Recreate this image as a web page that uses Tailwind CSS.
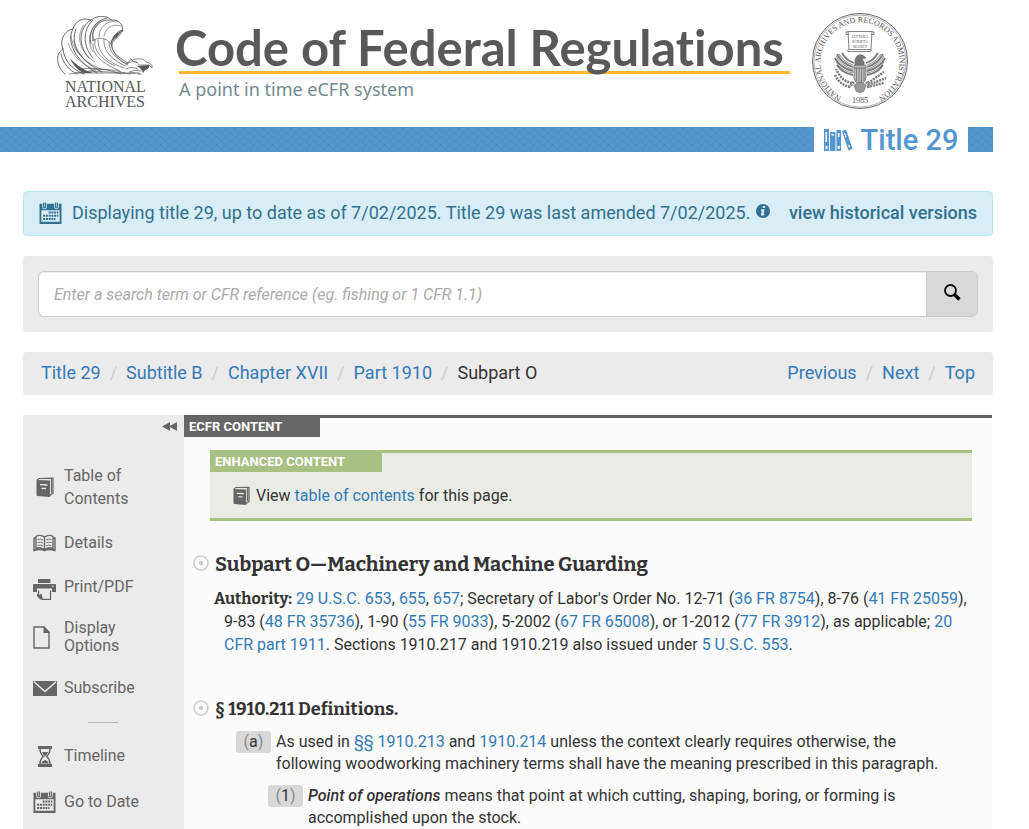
<!DOCTYPE html>
<html lang="en">
<head>
<meta charset="utf-8">
<title>eCFR Title 29 Subpart O</title>
<script src="https://cdn.jsdelivr.net/npm/@tailwindcss/browser@4"></script>
</head>
<body class="min-h-screen flex flex-col bg-white text-base text-[#333] font-[Roboto,'Liberation_Sans',sans-serif]">
<svg class="hidden" aria-hidden="true">
  <symbol id="cal" viewBox="0 0 24 24">
    <path fill="currentColor" fill-rule="evenodd" d="M0 2h3v3.500a2.500 2.500 0 0 0 5 0V2h8v3.500a2.500 2.500 0 0 0 5 0V2h3v22H0zM2 9v12.500h20V9z"/>
    <path fill="none" stroke="currentColor" stroke-width="1.300" d="M4.500 .5v5a1 1 0 0 0 2 0v-5M17.500 .5v5a1 1 0 0 0 2 0v-5"/>
    <path stroke="currentColor" stroke-width="2.200" stroke-dasharray="2.200 .8" d="M10 11.500h10.500M4 15h16.500M4 18.500h13.500"/>
  </symbol>
  <symbol id="book" viewBox="0 0 18 20">
    <path fill="none" stroke="currentColor" stroke-width="1.200" d="M1 2.500L3 1l14-.3v15L14 18M15.500 1.500v14"/>
    <path fill="currentColor" d="M.5 2.500l13.500.5v16.500L1.500 18.500Q.5 18.500.5 17z"/>
    <path stroke="#ebebeb" stroke-width="1.300" d="M4 7.200l7.500.3M5.500 10.800l4.500.2"/>
  </symbol>
</svg>

<header>
  <div class="h-[127px] flex items-start pl-[55px]">
    <a href="#" class="block w-[104px] pt-4 shrink-0 text-[#58595b]" aria-label="National Archives">
      <svg class="block w-[100px] h-[60px]" viewBox="0 0 100 60" fill="none" stroke="#58595b" stroke-width=".9" stroke-linecap="round">
        <path d="M10 58C1 50 0 38 8 33C4 24 10 14 18 13C20 5 28 1 36 4C42-1 52-1 56 4C64 3 70 10 67 15"/>
        <path d="M8 33C9 44 16 53 29 58M6 38C8 48 15 55 22 58M18 13C11 25 20 45 42 57M21 13C15 28 24 44 47 56M36 4C22 12 24 32 34 42M38 4C27 14 28 31 38 42M56 4C42 3 36 14 38 24M52 2C40 5 33 15 36 28"/>
        <path d="M13 27C17 39 26 48 40 54M16 20C18 35 29 46 46 53M29 9C20 20 25 37 40 46M45 5C33 13 32 26 38 36M62 5C50 5 44 12 44 21M66 10C56 7 50 13 49 20M44 8C37 14 36 20 40 25" stroke-width=".6"/>
        <path d="M37 25C44 20 52 22 56 28C59 39 64 45 73 49M38 28C37 38 46 47 65 55M43 24C43 36 51 46 69 52M49 23C48 34 56 44 71 50M54 26C54 36 61 43 72 48M40 24C38 34 46 43 60 50" stroke-width=".7"/>
        <path d="M67 15C64 23 56 23 57 31C58 38 66 43 73 47M60 21C61 16 65 14 68 15C66 12 64 19 60 21Z" />
        <path fill="#58595b" stroke="none" d="M57 23q3-7 9-7q-2 2-4 5q-6 3-5 9q-2-4 0-7zM15 42q7 9 22 15h-9Q18 51 15 42zM18 23q4 16 18 26Q21 40 18 23z"/>
        <path d="M72 48Q74 43 81 43Q89 42 91 46Q98 47 97 52L94 49L83 49M72 47q5-2 10-1M75 42l3 3M71 53Q76 50 83 53M74 56q6-3 12-1M30 56Q50 50 70 57M14 58Q40 53 75 58M25 53Q45 50 66 58M20 57h60M78 45l5 2" stroke-width=".7"/>
        <path fill="#58595b" d="M82 50l12-1q1 4-4 5l-2 3q-1-4-6-7z" stroke="none"/>
        <path d="M75 57h9M83 58h3"/>
      </svg>
      <div class="pl-[10px] pt-[3px] font-['Liberation_Serif',serif] text-base leading-[15px]">NATIONAL<br>ARCHIVES</div>
    </a>
    <div class="ml-[20px] mt-4 w-[611px] shrink-0">
      <a href="#" class="relative z-10 block h-[55px] -ml-1 whitespace-nowrap text-[#58595b] font-bold text-[49px] leading-[63px] [font-variant-ligatures:none] font-[Lato,sans-serif]">Code of Federal Regulations</a>
      <div class="h-[3px] bg-[#fdb933]"></div>
      <div class="pt-[3px] text-lg leading-6 text-[#728a8f] font-['Noto_Sans',sans-serif]">A point in time eCFR system</div>
    </div>
    <svg class="ml-[21px] mt-3 w-[98px] h-[98px] shrink-0" viewBox="0 0 98 98" fill="none" stroke="#666" role="img" aria-label="National Archives and Records Administration seal">
      <defs><path id="ring" d="M33 86A39.500 39.500 0 1 1 65 86"/></defs>
      <circle cx="49" cy="49" r="47.500"/><circle cx="49" cy="49" r="46" stroke-width=".5"/>
      <g fill="#555" stroke="none" class="font-['Liberation_Serif',serif]">
        <text font-size="8"><textPath href="#ring" startOffset="50%" text-anchor="middle">NATIONAL ARCHIVES AND RECORDS ADMINISTRATION</textPath></text>
        <text x="49" y="91" font-size="8" text-anchor="middle">1985</text>
        <text x="49" y="26" font-size="4" text-anchor="middle">LITTERA</text><text x="49" y="31" font-size="4" text-anchor="middle">SCRIPTA</text><text x="49" y="36" font-size="4" text-anchor="middle">MANET</text>
      </g>
      <path stroke-width=".8" d="M37 19.500h24l-1 18H38zM37 19.500q-3 0-2 3h3M61 19.500q3 0 2 3h-3M38 37.500q-3 1-1 2h22q2 0 1-2"/>
      <path stroke="#777" stroke-width="1.800" d="M43 51Q36 49 31 41M42 55Q31 52 26 42M42 59Q29 56 24 46M42 63Q31 61 26 53M55 51Q62 49 67 41M56 55Q67 52 72 42M56 59Q69 56 74 46M56 63Q67 61 72 53"/>
      <path stroke-width=".6" stroke="#444" d="M42 53Q33 50 28 42M42 57Q30 54 25 44M42 61Q30 59 25 50M56 53Q65 50 70 42M56 57Q68 54 73 44M56 61Q68 59 73 50"/>
      <path fill="#bbb" d="M43 53h12v13q-1 5-6 7q-5-2-6-7z" stroke-width=".8"/><path stroke-width=".7" d="M45.500 56v13M48 56v15M50.500 56v15M53 56v13M43 56h12"/>
      <path fill="#777" d="M44 53q-1-6 2-9q3-3 7 0l2 2-4 1q3 3 2 6z" stroke-width=".5"/>
      <path stroke-width="2.500" stroke="#777" stroke-dasharray="2 1" d="M41 71Q31 70 25 57M39 75Q29 73 24 63M57 71L73 60M57 73L75 66M56 75L73 71"/>
      <path stroke-width="3" stroke="#888" stroke-dasharray="2 .8" d="M43 70l-5 5M55 70l5 5M45 74q4 7 8 0"/>
      <path fill="#999" d="M43 73l6-3 6 3-2 6q-4 3-8 0z" stroke-width=".6"/>
    </svg>
  </div>
  <div class="mr-9 h-[25px] flex items-center bg-[#5396d0] bg-[repeating-linear-gradient(40deg,#42424214_0_1px,transparent_1px_6px),repeating-linear-gradient(-40deg,#42424214_0_1px,transparent_1px_6px)]">
    <h1 class="ml-auto mr-[25px] w-[154px] h-[34px] bg-white flex items-center justify-center gap-2 text-[#5396d0] text-[29px] font-medium leading-[34px] whitespace-nowrap">
      <svg class="w-[29px] h-[22px] shrink-0" viewBox="0 0 29 22"><g fill="#5396d0"><path d="M0 0h5v22H0zM6 3h5.500v19H6zM12.500 1h4.500v21h-4.500zM18 2l4-1.500L28.500 20l-4 1.500z"/></g><path fill="white" d="M1.500 3h1.500v10h-1.500zM1.500 17h2v3h-2zM7.500 5h2.500v1.500H7.500zM14 4h1.500v4h-1.500zM13.700 17h2v3h-2zM20 4l1-.3 1.500 4.500-1 .3zM24 16.500l1.500-.5.7 2-1.500.5z"/></svg>
      <span>Title 29</span>
    </h1>
  </div>
</header>

<div class="flex-1 flex flex-col pl-[23px] pr-9 pt-[39px]">
  <div class="h-[45px] shrink-0 flex items-center rounded bg-[#d9edf7] border border-[#bce8f1] text-[#31708f] text-lg px-[15px] pb-[2px] whitespace-nowrap">
    <svg class="w-[23px] h-[22px] shrink-0"><use href="#cal"/></svg>
    <p class="ml-[10px]">Displaying title 29, up to date as of 7/02/2025. Title 29 was last amended 7/02/2025.</p>
    <svg class="ml-[6px] mb-1 w-[14px] h-[14px] shrink-0" viewBox="0 0 14 14"><circle cx="7" cy="7" r="7" fill="#31708f"/><path fill="#d9edf7" d="M7 2h2.300l-.4 2H6.600zM5 5.200h3.600l-1.100 4.600 1.200-.4-.4 1.400q-3.300 1.800-3.300 0l.8-4.100-1.200-.1z"/></svg>
    <a href="#" class="ml-auto font-medium">view historical versions</a>
  </div>

  <form class="mt-5 h-[76px] shrink-0 flex p-[15px] rounded bg-[#ebebeb]">
    <input type="text" aria-label="Search" placeholder="Enter a search term or CFR reference (eg. fishing or 1 CFR 1.1)" class="flex-1 min-w-0 bg-white border border-r-0 border-[#ccc] rounded-l-md pl-[15px] pt-px text-base placeholder:italic placeholder:text-[#aaa] shadow-[inset_0_1px_1px_rgba(0,0,0,0.075)]">
    <button type="button" aria-label="Submit search" class="w-[52px] flex items-center justify-center pb-1 bg-[#d8d8d8] border border-[#ccc] rounded-r-md">
      <svg class="w-[17px] h-[17px]" viewBox="0 0 17 17" fill="none" stroke="black"><circle cx="6.500" cy="6.500" r="5.500" stroke-width="1.800"/><path stroke-width="3.300" d="M10.500 10.500l5 5"/></svg>
    </button>
  </form>

  <nav aria-label="Breadcrumb" class="mt-5 h-[43px] shrink-0 flex items-center gap-[9px] px-[18px] pb-[2px] rounded bg-[#ebebeb] text-lg text-[#337ab7] whitespace-nowrap">
    <a href="#">Title 29</a><span class="text-[#ccc]">/</span><a href="#">Subtitle B</a><span class="text-[#ccc]">/</span><a href="#">Chapter XVII</a><span class="text-[#ccc]">/</span><a href="#">Part 1910</a><span class="text-[#ccc]">/</span><span class="text-[#333]">Subpart O</span>
    <a href="#" class="ml-auto">Previous</a><span class="text-[#ccc]">/</span><a href="#">Next</a><span class="text-[#ccc]">/</span><a href="#">Top</a>
  </nav>

  <div class="mt-5 flex-1 flex">
    <aside class="w-[161px] shrink-0 bg-[#ebebeb] text-[#666]">
      <div class="flex justify-end pr-[7px] pt-[7px]">
        <button type="button" aria-label="Collapse sidebar" class="h-[9px]"><svg class="block w-[15px] h-[9px]" viewBox="0 0 15 9"><path fill="#666" d="M8 0v9L0 4.500zM15 0v9L7 4.500z"/></svg></button>
      </div>
      <nav aria-label="Page tools" class="pt-8 pl-[10px]">
        <a href="#" class="flex items-center h-[48px] gap-2 leading-[23px]"><span class="w-[23px] flex justify-center shrink-0"><svg class="w-[18px] h-[21px]"><use href="#book"/></svg></span><span>Table of<br>Contents</span></a>
        <a href="#" class="flex items-center h-[44px] mt-[10px] gap-2"><svg class="w-[23px] h-[18px] shrink-0" viewBox="0 0 23 18" fill="none" stroke="#666"><path stroke-width="1.400" d="M11.500 15.500Q7 12.500 3 14.500V2.500Q7 0 11.500 3Q16 0 20 2.500V14.500Q16 12.500 11.500 15.500zM11.500 3v13M2.500 4H1v12.500q6-2 10.500 0q4.500-2 10.500 0V4h-1.500"/><path stroke-width=".9" d="M4.500 5.500q3-1 5.500.5M4.500 8.500q3-1 5.500.5M4.500 11.500q3-1 5.500.5M13 6q2.500-1.500 5.500-.5M13 9q2.500-1.500 5.500-.5M13 12q2.500-1.500 5.500-.5"/></svg><span>Details</span></a>
        <a href="#" class="flex items-center h-[44px] gap-2"><svg class="w-[23px] h-[21px] shrink-0 mt-1" viewBox="0 0 23 21"><path fill="#666" d="M5 0h12.500v4H5zM1 5h21q1 0 1 1v7h-4V9.500H4V13H0V6q0-1 1-1z"/><path fill="#ebebeb" d="M19 6.500h1.500v1.300H19z"/><path fill="none" stroke="#666" stroke-width="1.300" d="M5.500 11.500q.5 4-1 4.500q1 3 5 4.300h8V11.500"/><path fill="#666" d="M4 15.500q3.500.5 4.500-1l1.500 6.500q-4-1-6-5.500z"/></svg><span>Print/PDF</span></a>
        <a href="#" class="flex items-center h-[56px] gap-2 leading-[18px]"><span class="w-[23px] shrink-0"><svg class="w-[17px] h-[23px]" viewBox="0 0 17 23"><path fill="none" stroke="#666" stroke-width="1.400" d="M1 1h10l5 5v16H1z"/><path fill="#666" d="M10.500 0L17 7h-6.500z"/></svg></span><span>Display<br>Options</span></a>
        <a href="#" class="flex items-center h-[44px] mt-px gap-[7px]"><svg class="w-[24px] h-[15px] shrink-0" viewBox="0 0 24 15"><path fill="#666" d="M0 0h24v15H0z"/><path fill="none" stroke="#ebebeb" stroke-width="1.500" d="M1 .8l11 9.700L23 .8"/></svg><span>Subscribe</span></a>
        <hr class="w-[30px] ml-[55px] mt-3 mb-[11px] border-[#b5b5b5]">
        <a href="#" class="flex items-center h-[44px] gap-2"><span class="w-[23px] flex justify-center shrink-0"><svg class="w-[14px] h-[21px]" viewBox="0 0 14 21"><path fill="#666" d="M0 0h14v3H0zM0 18h14v3H0zM3 17.500q1-3 4-3.500q3 .5 4 3.500zM4 6h6q-1 3-3 4q-2-1-3-4z"/><path fill="none" stroke="#666" stroke-width="1.500" d="M2 2.500q0 5 3.500 8Q2 13 2 18.500M12 2.500q0 5-3.500 8Q12 13 12 18.500"/></svg></span><span>Timeline</span></a>
        <a href="#" class="flex items-center h-[44px] mt-[2px] gap-2"><svg class="w-[23px] h-[22px] shrink-0"><use href="#cal"/></svg><span>Go to Date</span></a>
      </nav>
    </aside>

    <main class="flex-1 min-w-0 mr-px bg-[#fbfbfb] border-t-[3px] border-[#666]">
      <div class="w-[136px] h-[19px] bg-[#666] pl-[5px] text-[13px] leading-[17px] font-bold text-white">ECFR CONTENT</div>
      <section class="mt-[13px] ml-[26px] mr-5 h-[71px] bg-[#e9ece5] border-y-[3px] border-[#a8c082]">
        <div class="w-[172px] h-[19px] bg-[#a8c082] pl-[5px] text-[13px] leading-[17px] font-bold text-white">ENHANCED CONTENT</div>
        <p class="flex items-center gap-[6px] mt-3 pl-[23px]"><svg class="w-[17px] h-[20px] text-[#666]"><use href="#book"/></svg><span>View <a href="#" class="text-[#337ab7]">table of contents</a> for this page.</span></p>
      </section>

      <section class="mt-7 pl-[9px] pr-5">
        <div class="flex items-center gap-[6px] h-7">
          <svg class="w-4 h-4 shrink-0" viewBox="0 0 16 16"><circle cx="8" cy="8" r="7" fill="none" stroke="#ccc" stroke-width="1.500"/><circle cx="8" cy="8" r="2.200" fill="#ccc"/></svg>
          <h2 class="pt-[2px] text-xl font-bold whitespace-nowrap font-[Bitter,'DejaVu_Serif_Condensed','DejaVu_Serif',serif]">Subpart O—Machinery and Machine Guarding</h2>
        </div>
        <p class="mt-[10px] pl-[31px] -indent-[10px] leading-[23px] [&_a]:text-[#337ab7]"><strong class="font-[Bitter,'DejaVu_Serif_Condensed','DejaVu_Serif',serif]">Authority:</strong> <a href="#">29 U.S.C. 653</a>, <a href="#">655</a>, <a href="#">657</a>; Secretary of Labor's Order No. 12-71 (<a href="#">36 FR 8754</a>), 8-76 (<a href="#">41 FR 25059</a>), 9-83 (<a href="#">48 FR 35736</a>), 1-90 (<a href="#">55 FR 9033</a>), 5-2002 (<a href="#">67 FR 65008</a>), or 1-2012 (<a href="#">77 FR 3912</a>), as applicable; <a href="#">20 CFR part 1911</a>. Sections 1910.217 and 1910.219 also issued under <a href="#">5 U.S.C. 553</a>.</p>
      </section>

      <section class="mt-[38px] pl-[9px] pr-10 leading-[22px]">
        <div class="flex items-center gap-[6px] h-7">
          <svg class="w-4 h-4 shrink-0" viewBox="0 0 16 16"><circle cx="8" cy="8" r="7" fill="none" stroke="#ccc" stroke-width="1.500"/><circle cx="8" cy="8" r="2.200" fill="#ccc"/></svg>
          <h3 class="pt-[2px] text-lg font-bold whitespace-nowrap font-[Bitter,'DejaVu_Serif_Condensed','DejaVu_Serif',serif]">§ 1910.211 Definitions.</h3>
        </div>
        <div class="mt-[9px] ml-[43px] flex items-start gap-[5px]">
          <span class="w-[35px] h-[22px] shrink-0 rounded-[3px] bg-[#d8d8d8] text-center text-[#888]">(<span class="text-[#333]">a</span>)</span>
          <p>As used in <a href="#" class="text-[#337ab7]">§§ 1910.213</a> and <a href="#" class="text-[#337ab7]">1910.214</a> unless the context clearly requires otherwise, the following woodworking machinery terms shall have the meaning prescribed in this paragraph.</p>
        </div>
        <div class="mt-[10px] ml-[75px] flex items-start gap-[5px]">
          <span class="w-[35px] h-[22px] shrink-0 rounded-[3px] bg-[#d8d8d8] text-center text-[#888]">(<span class="text-[#333]">1</span>)</span>
          <p><em class="font-medium">Point of operations</em> means that point at which cutting, shaping, boring, or forming is accomplished upon the stock.</p>
        </div>
      </section>
    </main>
  </div>
</div>
</body>
</html>
